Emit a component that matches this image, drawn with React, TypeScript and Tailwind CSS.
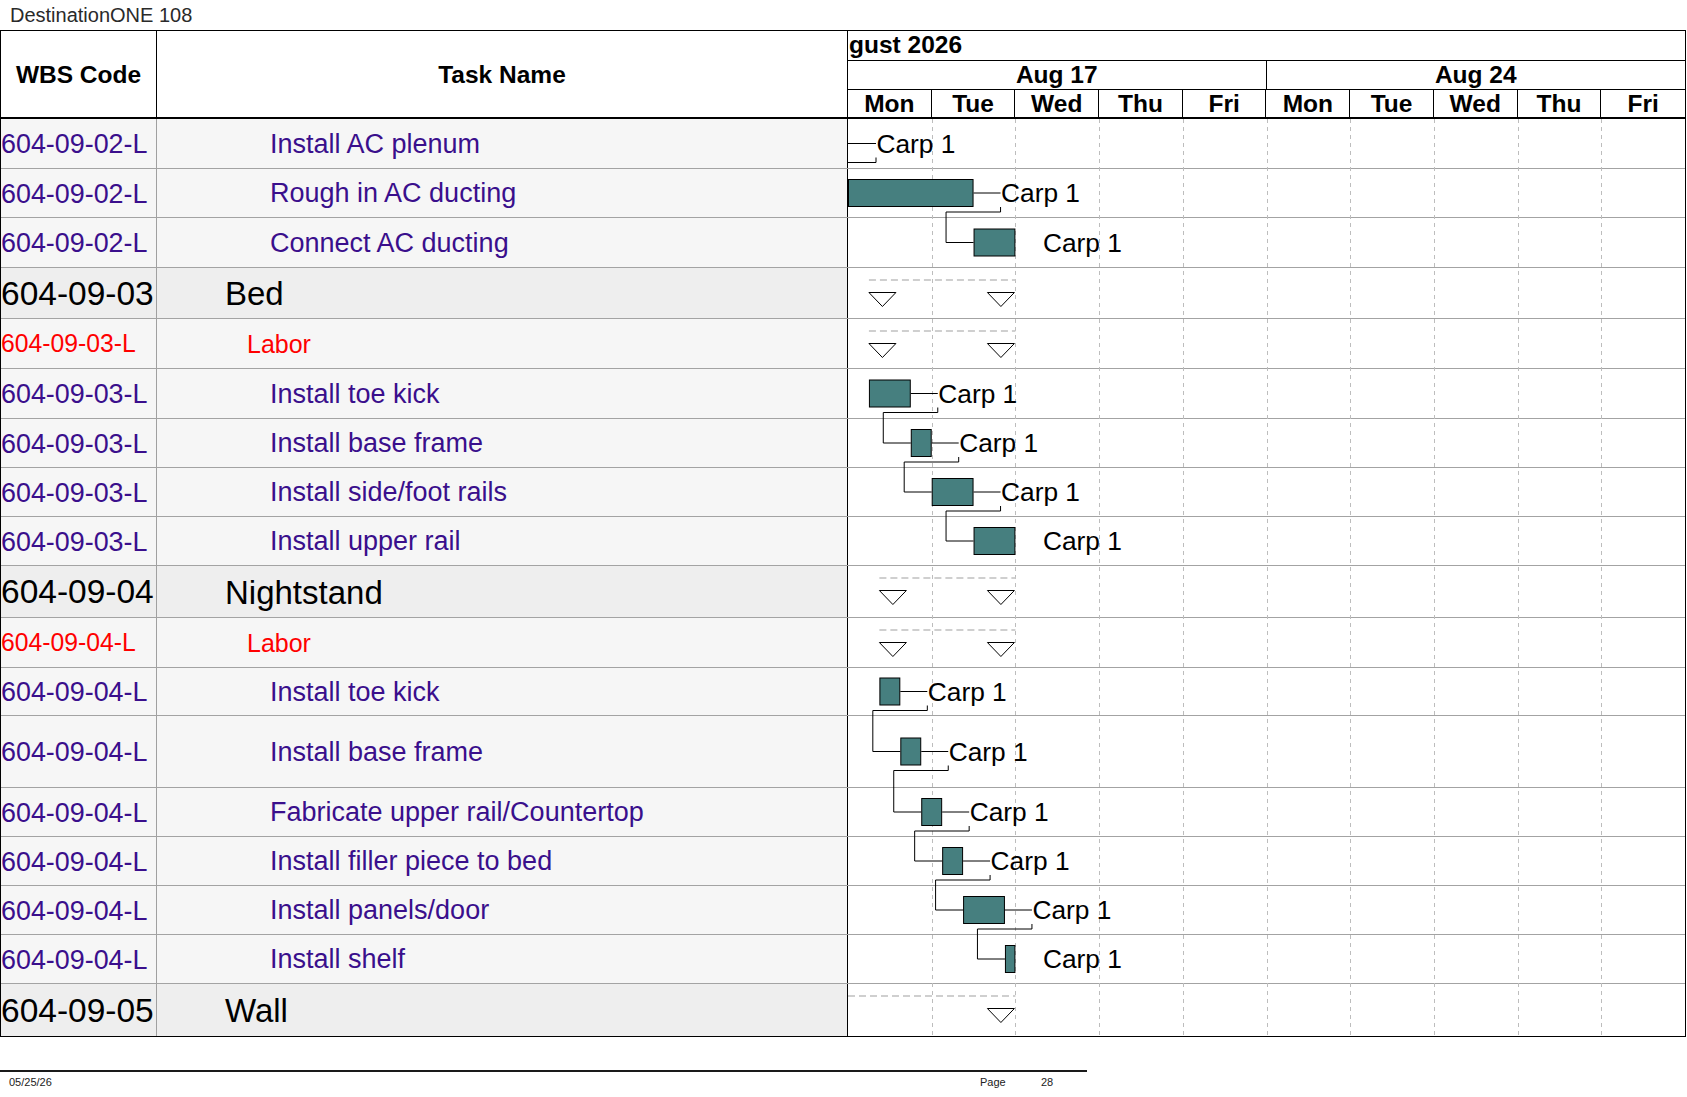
import React from "react";

type RowKind = "task" | "labor" | "group";
type Chart =
  | { kind: "lead" }
  | { kind: "bar"; s: number; e: number; conn?: boolean }
  | { kind: "sum"; s: number | null; e: number };

interface Row {
  kind: RowKind;
  code: string;
  name: string;
  h: number;
  hc: string;
  chart: Chart;
}

const rows: Row[] = [
  { kind: "task", code: "604-09-02-L", name: "Install AC plenum", h: 50, hc: "h-[50px]", chart: { kind: "lead" } },
  { kind: "task", code: "604-09-02-L", name: "Rough in AC ducting", h: 49, hc: "h-[49px]", chart: { kind: "bar", s: 0, e: 6, conn: true } },
  { kind: "task", code: "604-09-02-L", name: "Connect AC ducting", h: 50, hc: "h-[50px]", chart: { kind: "bar", s: 6, e: 8 } },
  { kind: "group", code: "604-09-03", name: "Bed", h: 51, hc: "h-[51px]", chart: { kind: "sum", s: 1, e: 8 } },
  { kind: "labor", code: "604-09-03-L", name: "Labor", h: 50, hc: "h-[50px]", chart: { kind: "sum", s: 1, e: 8 } },
  { kind: "task", code: "604-09-03-L", name: "Install toe kick", h: 50, hc: "h-[50px]", chart: { kind: "bar", s: 1, e: 3, conn: true } },
  { kind: "task", code: "604-09-03-L", name: "Install base frame", h: 49, hc: "h-[49px]", chart: { kind: "bar", s: 3, e: 4, conn: true } },
  { kind: "task", code: "604-09-03-L", name: "Install side/foot rails", h: 49, hc: "h-[49px]", chart: { kind: "bar", s: 4, e: 6, conn: true } },
  { kind: "task", code: "604-09-03-L", name: "Install upper rail", h: 49, hc: "h-[49px]", chart: { kind: "bar", s: 6, e: 8 } },
  { kind: "group", code: "604-09-04", name: "Nightstand", h: 52, hc: "h-[52px]", chart: { kind: "sum", s: 1.5, e: 8 } },
  { kind: "labor", code: "604-09-04-L", name: "Labor", h: 50, hc: "h-[50px]", chart: { kind: "sum", s: 1.5, e: 8 } },
  { kind: "task", code: "604-09-04-L", name: "Install toe kick", h: 48, hc: "h-[48px]", chart: { kind: "bar", s: 1.5, e: 2.5, conn: true } },
  { kind: "task", code: "604-09-04-L", name: "Install base frame", h: 72, hc: "h-[72px]", chart: { kind: "bar", s: 2.5, e: 3.5, conn: true } },
  { kind: "task", code: "604-09-04-L", name: "Fabricate upper rail/Countertop", h: 49, hc: "h-[49px]", chart: { kind: "bar", s: 3.5, e: 4.5, conn: true } },
  { kind: "task", code: "604-09-04-L", name: "Install filler piece to bed", h: 49, hc: "h-[49px]", chart: { kind: "bar", s: 4.5, e: 5.5, conn: true } },
  { kind: "task", code: "604-09-04-L", name: "Install panels/door", h: 49, hc: "h-[49px]", chart: { kind: "bar", s: 5.5, e: 7.5, conn: true } },
  { kind: "task", code: "604-09-04-L", name: "Install shelf", h: 49, hc: "h-[49px]", chart: { kind: "bar", s: 7.5, e: 8 } },
  { kind: "group", code: "604-09-05", name: "Wall", h: 52, hc: "h-[52px]", chart: { kind: "sum", s: null, e: 8 } },
];

const Q = 20.925;
const DAY = 83.7;
const CHART_W = 837;
const BODY_H = rows.reduce((a, r) => a + r.h, 0);

const tops: number[] = [];
{
  let acc = 0;
  for (const r of rows) {
    tops.push(acc);
    acc += r.h;
  }
}
const centers = rows.map((r, i) => tops[i] + (r.h - 1) / 2);

const FONT = "Liberation Sans, Arial, sans-serif";

function Label({ x, c }: { x: number; c: number }) {
  return (
    <text x={x} y={c + 9.3} fontFamily={FONT} fontSize={26.3} fill="#000">
      Carp 1
    </text>
  );
}

function Triangle({ x, top }: { x: number; top: number }) {
  return (
    <polygon
      points={`${x},${top} ${x + 27},${top} ${x + 13.5},${top + 14}`}
      fill="#fff"
      stroke="#000"
      strokeWidth={1}
    />
  );
}

function ChartOverlay() {
  const els: React.ReactNode[] = [];
  for (let d = 1; d < 10; d++) {
    const x = Math.round(d * DAY) + 0.5;
    els.push(
      <line key={`g${d}`} x1={x} x2={x} y1={0} y2={BODY_H} stroke="#bdbdbd" strokeWidth={1} strokeDasharray="4 4" />
    );
  }
  rows.forEach((r, i) => {
    const c = centers[i];
    const t = tops[i];
    const ch = r.chart;
    if (ch.kind === "lead") {
      els.push(<line key={`l${i}`} x1={0} x2={28} y1={c} y2={c} stroke="#000" strokeWidth={1} />);
      els.push(<Label key={`t${i}`} x={28.5} c={c} />);
      els.push(
        <path key={`p${i}`} d={`M 28 ${c + 14} V ${c + 19} H 0`} fill="none" stroke="#000" strokeWidth={1} />
      );
    } else if (ch.kind === "bar") {
      const x1 = ch.s * Q;
      const x2 = ch.e * Q;
      els.push(
        <rect key={`b${i}`} x={x1 + 0.5} y={c - 13.5} width={x2 - x1 - 1} height={27} fill="#467f7f" stroke="#000" strokeWidth={1} />
      );
      if (ch.e < 8) {
        els.push(<line key={`l${i}`} x1={x2} x2={x2 + 27} y1={c} y2={c} stroke="#000" strokeWidth={1} />);
      }
      els.push(<Label key={`t${i}`} x={x2 + 27.5} c={c} />);
      if (ch.conn) {
        const nx = rows[i + 1].chart;
        if (nx.kind === "bar") {
          const lx = x2 + 27;
          const s2 = nx.s * Q;
          const c2 = centers[i + 1];
          els.push(
            <path
              key={`p${i}`}
              d={`M ${lx} ${c + 14} V ${c + 19} H ${s2 - 27.5} V ${c2} H ${s2}`}
              fill="none"
              stroke="#000"
              strokeWidth={1}
            />
          );
        }
      }
    } else {
      const xs = ch.s === null ? 0 : ch.s * Q;
      const xe = ch.e * Q;
      els.push(
        <line key={`d${i}`} x1={xs} x2={xe} y1={t + 12} y2={t + 12} stroke="#cfcfcf" strokeWidth={2} strokeDasharray="7 4" />
      );
      if (ch.s !== null) els.push(<Triangle key={`a${i}`} x={xs} top={t + 24.5} />);
      els.push(<Triangle key={`z${i}`} x={xe - 28} top={t + 24.5} />);
    }
  });
  return (
    <svg
      className="absolute top-0 left-[847px]"
      width={CHART_W}
      height={BODY_H}
      viewBox={`0 0 ${CHART_W} ${BODY_H}`}
    >
      {els}
    </svg>
  );
}

function WbsText({ r }: { r: Row }) {
  if (r.kind === "task")
    return (
      <span className="inline-block origin-left scale-x-[0.96] whitespace-nowrap text-[28px] leading-none text-[#3a0f8c]">
        {r.code}
      </span>
    );
  if (r.kind === "labor")
    return (
      <span className="inline-block origin-left scale-x-[0.97] whitespace-nowrap text-[25.5px] leading-none text-[#f00]">
        {r.code}
      </span>
    );
  return <span className="whitespace-nowrap text-[33.5px] leading-none text-black">{r.code}</span>;
}

function NameText({ r }: { r: Row }) {
  if (r.kind === "task")
    return <span className="whitespace-nowrap pl-[113px] text-[27px] leading-none text-[#3a0f8c]">{r.name}</span>;
  if (r.kind === "labor")
    return <span className="whitespace-nowrap pl-[90px] text-[25px] leading-none text-[#f00]">{r.name}</span>;
  return <span className="whitespace-nowrap pl-[68px] text-[33px] leading-none text-black">{r.name}</span>;
}

const days = ["Mon", "Tue", "Wed", "Thu", "Fri", "Mon", "Tue", "Wed", "Thu", "Fri"];

export default function App() {
  return (
    <div className="w-[1687px] h-[1097px] bg-white font-['Liberation_Sans',Arial,sans-serif] text-black overflow-hidden">
      <div className="h-[30px] leading-[30px] pl-[10px] text-[20px] text-[#2a2a2a]">DestinationONE 108</div>

      <div className="w-[1686px] border border-black">
        {/* header */}
        <div className="flex h-[88px] border-b-2 border-black">
          <div className="w-[156px] shrink-0 border-r border-black flex items-center justify-center pt-[2px] font-bold text-[24.5px]">
            WBS Code
          </div>
          <div className="w-[691px] shrink-0 border-r border-black flex items-center justify-center pt-[2px] font-bold text-[24.5px]">
            Task Name
          </div>
          <div className="flex-1 flex flex-col">
            <div className="h-[30px] border-b border-black flex items-center pl-px font-bold text-[24.5px] leading-none">
              gust 2026
            </div>
            <div className="h-[29px] border-b border-black grid grid-cols-2">
              <div className="border-r border-black flex items-center justify-center pt-px font-bold text-[24.5px] leading-none">
                Aug 17
              </div>
              <div className="flex items-center justify-center pt-px font-bold text-[24.5px] leading-none">Aug 24</div>
            </div>
            <div className="h-[27px] grid grid-cols-10">
              {days.map((d, i) => (
                <div
                  key={i}
                  className={`flex items-center justify-center pt-px font-bold text-[24.5px] leading-none ${
                    i < 9 ? "border-r border-black" : ""
                  }`}
                >
                  {d}
                </div>
              ))}
            </div>
          </div>
        </div>

        {/* body */}
        <div className="relative">
          {rows.map((r, i) => {
            const last = i === rows.length - 1;
            const bg = r.kind === "group" ? "bg-[#eeeeee]" : "bg-[#f6f6f6]";
            return (
              <div key={i} className={`flex ${r.hc} ${last ? "" : "border-b border-[#a3a3a3]"}`}>
                <div className={`w-[156px] shrink-0 border-r border-[#a0a0a0] ${bg} flex items-center pt-px overflow-hidden`}>
                  <WbsText r={r} />
                </div>
                <div className={`w-[691px] shrink-0 border-r border-black ${bg} flex items-center pt-px overflow-hidden`}>
                  <NameText r={r} />
                </div>
                <div className="flex-1 bg-white" />
              </div>
            );
          })}
          <ChartOverlay />
        </div>
      </div>

      {/* footer */}
      <div className="mt-[33px] w-[1087px] border-t-2 border-[#1a1a1a]">
        <div className="flex pt-[4px] text-[11px] leading-[13px] text-[#222]">
          <span className="w-[980px] pl-[9px]">05/25/26</span>
          <span className="w-[61px]">Page</span>
          <span>28</span>
        </div>
      </div>
    </div>
  );
}
